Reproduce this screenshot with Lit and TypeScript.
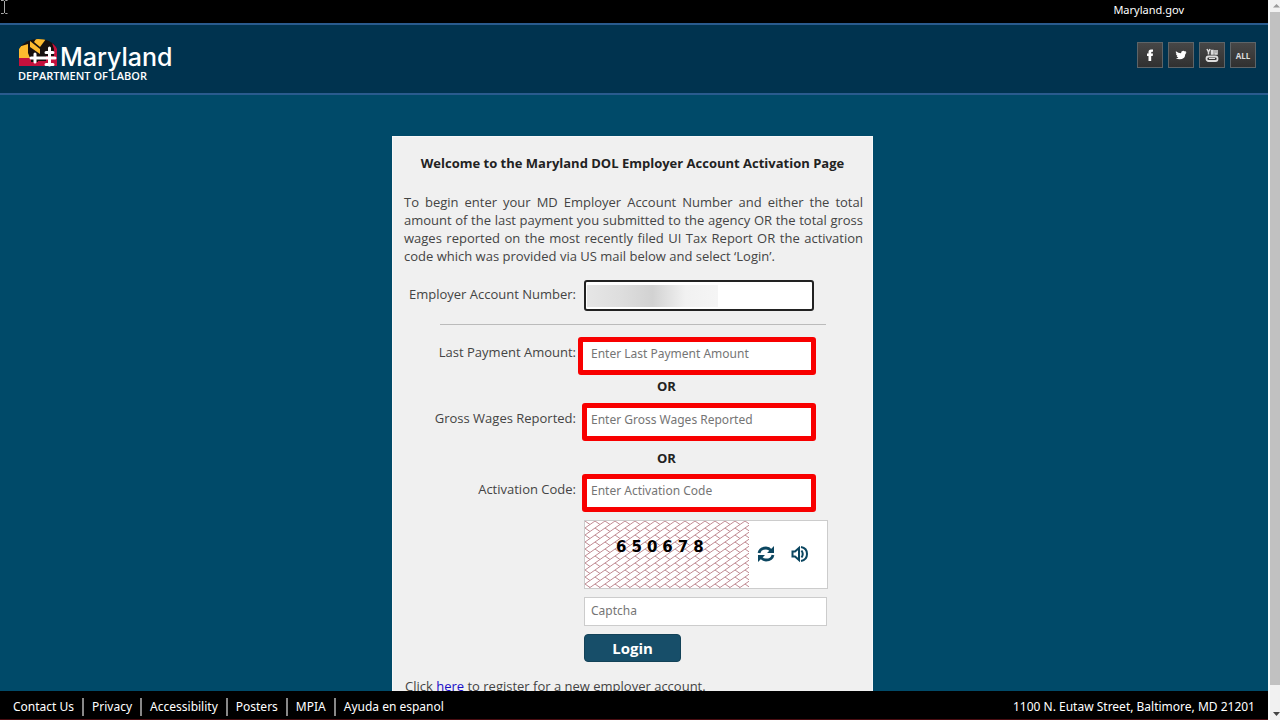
import { LitElement, html, css, svg } from "lit";
import { customElement } from "lit/decorators.js";

@customElement("app-root")
export class AppRoot extends LitElement {
  static styles = css`
    :host {
      display: flex;
      height: 100vh;
      overflow: hidden;
      font-family: "Open Sans", "Noto Sans", sans-serif;
      font-size: 13px;
      line-height: 18px;
      color: #444;
      background: #f1f1f1;
    }
    * { box-sizing: border-box; }
    .page {
      position: relative;
      flex: 1;
      min-width: 0;
      display: flex;
      flex-direction: column;
      background: #004a69;
      border-bottom: 1px solid #4a0d12;
    }
    .cursor { position: absolute; left: 0; top: 0; }
    .topbar {
      flex: none;
      height: 23px;
      padding: 1px 84px 0 0;
      background: #000;
      text-align: right;
      font-size: 11px;
    }
    .topbar a, footer a { color: #fff; text-decoration: none; }
    .topbar, footer { font-family: "Noto Sans", "Open Sans", sans-serif; }
    header {
      flex: none;
      display: flex;
      justify-content: space-between;
      align-items: flex-start;
      height: 72px;
      padding: 13px 12px 0 18px;
      background: #00334f;
      border-top: 2px solid #2a5b8e;
      border-bottom: 2px solid #2a5b8e;
    }
    .logo { color: #fff; text-decoration: none; font-family: "Inter", sans-serif; }
    .brand { display: flex; align-items: center; height: 30px; gap: 2px; }
    .name { font-size: 25px; line-height: 30px; font-weight: 500; padding-top: 7px; }
    .dept { display: block; font: 600 11px/16px "Open Sans", sans-serif; }
    .social { display: flex; gap: 5px; padding-top: 4px; }
    .social a {
      display: flex;
      align-items: center;
      justify-content: center;
      width: 26px;
      height: 26px;
      background: linear-gradient(#474747, #303030);
      border: 1px solid #5d6468;
      color: #ddd;
      font: bold 8px "Open Sans", sans-serif;
      text-decoration: none;
    }
    main {
      flex: 1;
      min-height: 0;
      overflow: hidden;
      display: flex;
      justify-content: center;
      align-items: flex-start;
      padding: 41px 3px 0 0;
    }
    .card {
      width: 481px;
      padding: 17px 12px 40px;
      background: #f0f0f0;
      border: 1px solid #f8f8f8;
    }
    h1 { margin: 0 0 21px; font-size: 13px; line-height: 18px; color: #222; text-align: center; }
    p { margin: 0; }
    .intro { text-align: justify; margin: 0 -3px 15px -1px; }
    .row {
      display: grid;
      grid-template-columns: 171px 1fr;
      column-gap: 8px;
      align-items: start;
    }
    label { text-align: right; padding-top: 5px; white-space: nowrap; }
    .marked-row label { padding-top: 6px; }
    input {
      display: block;
      min-width: 0;
      margin: 0;
      padding: 0 6px 2px;
      border: 1px solid #ccc;
      background: #fff;
      font: 12px "Noto Sans", sans-serif;
      color: #555;
      outline: none;
    }
    input::placeholder { color: #757575; opacity: 1; }
    .account { position: relative; width: 230px; }
    .account input { width: 100%; height: 31px; border: 2px solid #222; border-radius: 3px; }
    .mask {
      position: absolute;
      left: 3px;
      top: 5px;
      width: 131px;
      height: 22px;
      background: linear-gradient(90deg, #e6e6e6, #dedede 25%, #d2d2d2 50%, #f1f1f1 75%, #f5f5f5);
    }
    hr { margin: 13px 34px 12px 35px; border: 0; border-top: 1px solid #bbb; }
    .marked { border: 5px solid #f80000; border-radius: 3px; height: 38px; width: 234px; margin-left: -2px; padding: 0 4px 5px; }
    .marked.wide { width: 238px; margin-left: -6px; padding-left: 8px; }
    .or { font-weight: bold; color: #222; padding-left: 73px; }
    .or-first { padding-top: 2px; padding-bottom: 8px; }
    .or-second { padding-top: 8px; padding-bottom: 7px; }
    .stack { grid-column: 2; display: flex; flex-direction: column; align-items: flex-start; gap: 8px; padding-top: 8px; }
    .captcha { display: flex; width: 244px; height: 69px; background: #fff; border: 1px solid #ccc; }
    .image { position: relative; width: 164px; height: 67px; }
    .image svg { display: block; }
    .digits {
      position: absolute;
      inset: 16px auto auto 31px;
      display: flex;
      gap: 5px;
      color: #000;
      font: bold 15px/20px "DejaVu Sans", sans-serif;
    }
    .tools { flex: 1; display: flex; align-items: center; gap: 14px; padding-left: 7px; }
    .tools button { padding: 0; border: 0; background: none; height: 20px; width: 20px; color: #0b4660; }
    .stack input { width: 243px; height: 29px; }
    .login {
      width: 97px;
      height: 28px;
      padding: 0 0 1px;
      border: 1px solid #134258;
      border-radius: 4px;
      background: #174e69;
      color: #fff;
      font: bold 15px "Open Sans", sans-serif;
    }
    .register { padding-top: 15px; }
    .register a { color: #1a0dc8; }
    footer {
      flex: none;
      display: flex;
      align-items: center;
      justify-content: space-between;
      height: 28px;
      padding: 3px 13px 0;
      background: #000;
      color: #fff;
      font-size: 12px;
    }
    nav { display: flex; }
    nav a { padding-right: 8px; margin-right: 8px; border-right: 2px solid #888; line-height: 18px; }
    nav a:last-child { border: 0; }
    .scrollbar {
      flex: none;
      width: 12px;
      display: flex;
      flex-direction: column;
      background: #f1f1f1;
      border-left: 2px solid #fff;
    }
    .arrow { height: 12px; flex: none; display: block; }
    .thumb { flex: 1; background: #c1c1c1; margin-bottom: 23px; }
  `;

  private crest() {
    return svg`<svg width="40" height="28" viewBox="0 0 40 28">
      <defs><clipPath id="dome"><path d="M1 27V10Q7 0 20 0T38 8L39 10V27Z"/></clipPath></defs>
      <g clip-path="url(#dome)">
        <path d="M0 0H40V28H0Z" fill="#17110f"/>
        <path d="M0 8L10 5V14L12 19H0Z" fill="#fdbb2f"/>
        <path d="M12 2L22 10V15L12 8Z" fill="#fdbb2f"/>
        <path d="M18 0H28L22 8L16 3Z" fill="#fdbb2f"/>
        <path d="M0 19H13V23H20V28H0ZM34 4L40 9V28H20V22H28V17H36V10Z" fill="#c5113d"/>
      </g>
      <path d="M17 15V23M13 19H37M31.500 9V26M28 13.500H35M28 25.500H35" stroke="#fff" stroke-width="3" stroke-linecap="round" fill="none"/>
    </svg>`;
  }

  render() {
    return html`
      <div class="page">
        <div class="topbar"><a href="#">Maryland.gov</a></div>
        <header>
          <a class="logo" href="#">
            <span class="brand">${this.crest()}<span class="name">Maryland</span></span>
            <span class="dept">DEPARTMENT OF LABOR</span>
          </a>
          <div class="social">
            <a href="#" aria-label="Facebook"><svg width="14" height="16" viewBox="0 0 14 16"><path d="M5.500 14V9H4V6.500h1.500V5Q5.500 2.500 8 2.500h2v2.300H9Q8.200 4.800 8.200 5.500v1h1.800L9.700 9H8.200v5Z" fill="#fff"/></svg></a>
            <a href="#" aria-label="Twitter"><svg width="12" height="12" viewBox="0 0 14 14"><path d="M1 2.500Q4 5 7 5Q7 2 9.500 2Q11 2 11.500 3L13 2.500L12.500 4L13.500 4L12 6Q11.500 12 5.500 12Q3 12 1 10.800Q3 10.800 4 10Q2 9.500 1.800 8L3 7.800Q1 7 1 5.300L2 5.500Q.5 4 1 2.500Z" fill="#fff"/></svg></a>
            <a href="#" aria-label="YouTube"><svg width="14" height="16" viewBox="1 1 14 14"><path d="M3 2l1.500 3L6 2M4.500 5v2.500M7.500 3.500h1.500V7H7.500ZM11 3V7h2V3" stroke="#ddd" stroke-width="1.500" fill="none"/><rect x="2.500" y="9.500" width="11" height="4.500" rx="2" fill="none" stroke="#ddd" stroke-width="1.800"/><path d="M5 11.500h6" stroke="#ddd"/></svg></a>
            <a href="#">ALL</a>
          </div>
        </header>
        <main>
          <form class="card" @submit=${(e: Event) => e.preventDefault()}>
            <h1>Welcome to the Maryland DOL Employer Account Activation Page</h1>
            <p class="intro">To begin enter your MD Employer Account Number and either the total amount of the last payment you submitted to the agency OR the total gross wages reported on the most recently filed UI Tax Report OR the activation code which was provided via US mail below and select ‘Login’.</p>
            <div class="row">
              <label for="account">Employer Account Number:</label>
              <div class="account"><input id="account" type="text" /><span class="mask"></span></div>
            </div>
            <hr />
            <div class="row marked-row">
              <label for="payment">Last Payment Amount:</label>
              <input class="marked wide" id="payment" placeholder="Enter Last Payment Amount" />
            </div>
            <div class="row or-first"><span></span><p class="or">OR</p></div>
            <div class="row marked-row">
              <label for="wages">Gross Wages Reported:</label>
              <input class="marked" id="wages" placeholder="Enter Gross Wages Reported" />
            </div>
            <div class="row or-second"><span></span><p class="or">OR</p></div>
            <div class="row marked-row">
              <label for="code">Activation Code:</label>
              <input class="marked" id="code" placeholder="Enter Activation Code" />
            </div>
            <div class="row">
              <div class="stack">
                <div class="captcha">
                  <div class="image">
                    <svg width="164" height="67">
                      <defs><pattern id="weave" width="10" height="7" patternUnits="userSpaceOnUse">
                        <path d="M-5 3.500L5 -3.500M0 7L10 0M5 10.500L15 3.500M0 0L5 3.500M0 7L2 8.400" stroke="#c08a92" fill="none"/>
                      </pattern></defs>
                      <rect width="164" height="67" fill="url(#weave)"/>
                    </svg>
                    <div class="digits">${[..."650678"].map((d) => html`<span>${d}</span>`)}</div>
                  </div>
                  <div class="tools">
                    <button type="button" aria-label="Refresh"><svg width="18" height="18" viewBox="0 0 18 18"><path d="M2 8Q3 3 9 3Q12 3 14 5.500M16 10Q15 15 9 15Q6 15 4 12.500" fill="none" stroke="currentColor" stroke-width="2.800"/><path d="M17 1V8H10ZM1 17V10H8Z" fill="currentColor"/></svg></button>
                    <button type="button" aria-label="Listen"><svg width="18" height="18" viewBox="0 0 18 18"><path d="M1.500 6.500H4L8 3V15L4 11.500H1.500Z" fill="none" stroke="currentColor" stroke-width="2"/><path d="M10 2Q16 3 16 9T10 16" fill="none" stroke="currentColor" stroke-width="2"/><path d="M10.500 5.500Q13 9 10.500 12.500" fill="none" stroke="currentColor" stroke-width="2"/></svg></button>
                  </div>
                </div>
                <input type="text" aria-label="Captcha" placeholder="Captcha" />
                <button class="login" type="submit">Login</button>
              </div>
            </div>
            <p class="register">Click <a href="#">here</a> to register for a new employer account.</p>
          </form>
        </main>
        <footer>
          <nav>
            <a href="#">Contact Us</a><a href="#">Privacy</a><a href="#">Accessibility</a><a href="#">Posters</a><a href="#">MPIA</a><a href="#">Ayuda en espanol</a>
          </nav>
          <span>1100 N. Eutaw Street, Baltimore, MD 21201</span>
        </footer>
        <svg class="cursor" width="9" height="14" viewBox="0 0 9 14"><path d="M1 .5H3.500L4.500 1.500L5.500 .5H7.500M4.500 1V13M1 13.500H3.500L4.500 12.500L5.500 13.500H7.500" stroke="#aaa" fill="none"/></svg>
      </div>
      <div class="scrollbar">
        <svg class="arrow" width="10" height="12" viewBox="0 0 10 12"><path d="M3 7.500L6.500 4L10 7.500Z" fill="#999"/></svg>
        <div class="thumb"></div>
        <svg class="arrow" width="10" height="12" viewBox="0 0 10 12"><path d="M3 4L6.500 8L10 4Z" fill="#444"/></svg>
      </div>
    `;
  }
}
